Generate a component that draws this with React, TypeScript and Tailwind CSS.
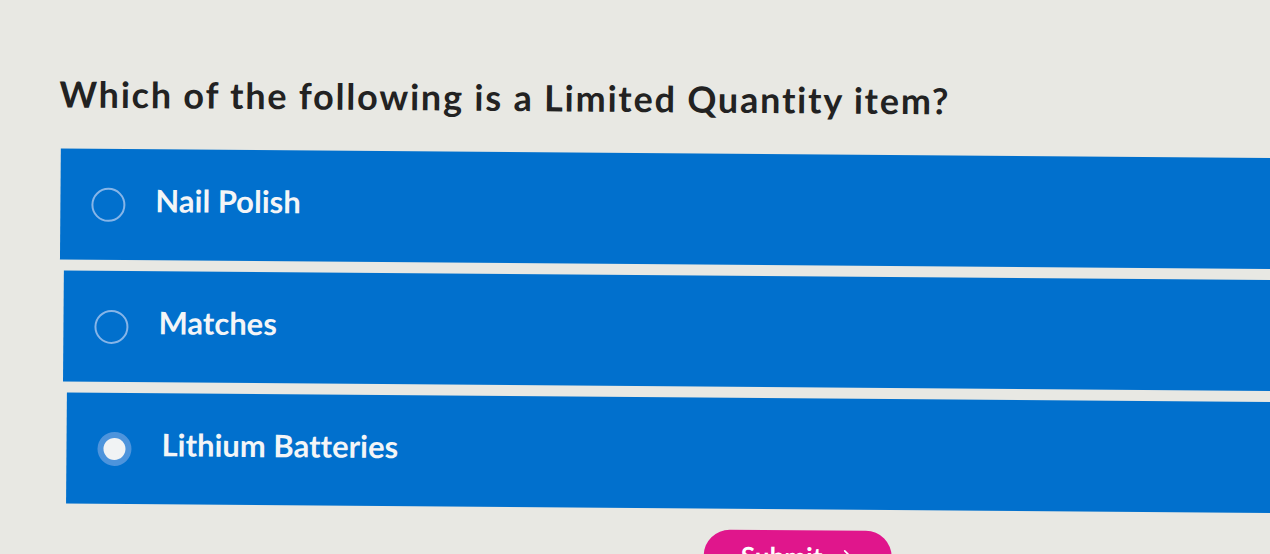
import { FiArrowRight } from 'react-icons/fi';

const options = [
    { label: 'Nail Polish', selected: false, indent: 'ml-[2px]' },
    { label: 'Matches', selected: false, indent: 'ml-[6px]' },
    { label: 'Lithium Batteries', selected: true, indent: 'ml-[10px]' },
];

function Radio({ checked }: { checked: boolean }) {
    if (checked) {
        return (
            <span className="flex h-[34px] w-[34px] shrink-0 items-center justify-center rounded-full bg-[#4d94dc]">
                <span className="h-[22px] w-[22px] rounded-full bg-[#f1f3f4]" />
            </span>
        );
    }
    return <span className="h-[34px] w-[34px] shrink-0 rounded-full border-2 border-[#86b5e8]" />;
}

export default function App() {
    return (
        <div className="min-h-screen overflow-hidden bg-[#e8e8e3] font-['Lato','Noto_Sans',sans-serif] [font-variant-ligatures:none]">
            <div className="w-[1320px] origin-top-left rotate-[0.45deg] pl-[60px] pt-[71px]">
                <h1 className="text-[36px] font-bold leading-[44px] tracking-[1.8px] text-[#222222]">
                    Which of the following is a Limited Quantity item?
                </h1>

                <div className="mt-[33px] flex flex-col gap-[11px]">
                    {options.map((option) => (
                        <label
                            key={option.label}
                            className={`${option.indent} flex h-[111px] items-center gap-[30px] bg-[#0170cd] pl-[31px]`}
                        >
                            <Radio checked={option.selected} />
                            <span className="pb-[9px] text-[31px] font-bold text-[#f3f5f7]">{option.label}</span>
                        </label>
                    ))}
                </div>

                <button className="ml-[648px] mt-[21px] flex h-[52px] w-[188px] items-center justify-center gap-3 rounded-full bg-[#e0168c] text-[26px] font-bold text-white">
                    Submit
                    <FiArrowRight className="h-5 w-5" />
                </button>
            </div>
        </div>
    );
}
